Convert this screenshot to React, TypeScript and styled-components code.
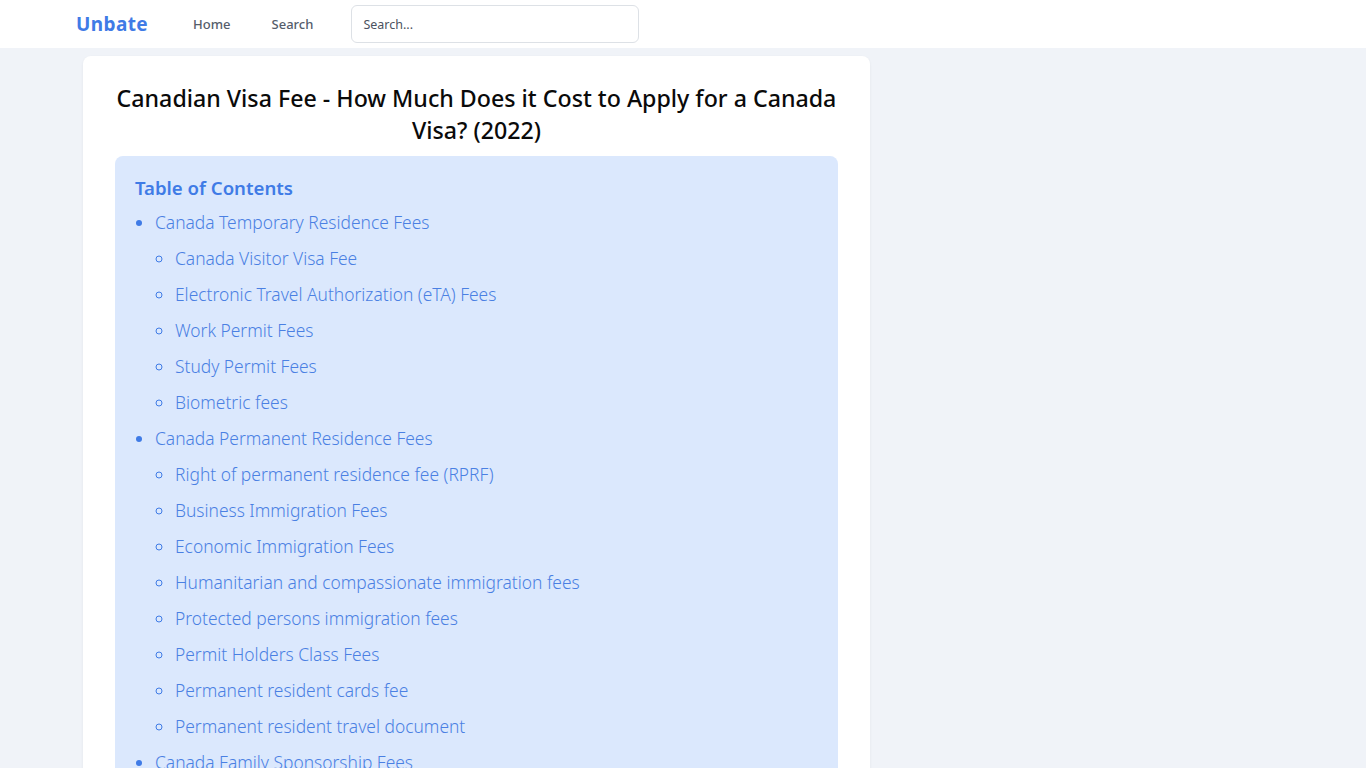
import React from "react";
import styled, { createGlobalStyle } from "styled-components";

const GlobalStyle = createGlobalStyle`
  * { box-sizing: border-box; }
  body {
    margin: 0;
    background: #f0f3f8;
    font-family: "Noto Sans", "Open Sans", sans-serif;
    color: #111;
  }
`;

interface TocItem {
  title: string;
  children?: string[];
}

const toc: TocItem[] = [
  {
    title: "Canada Temporary Residence Fees",
    children: [
      "Canada Visitor Visa Fee",
      "Electronic Travel Authorization (eTA) Fees",
      "Work Permit Fees",
      "Study Permit Fees",
      "Biometric fees",
    ],
  },
  {
    title: "Canada Permanent Residence Fees",
    children: [
      "Right of permanent residence fee (RPRF)",
      "Business Immigration Fees",
      "Economic Immigration Fees",
      "Humanitarian and compassionate immigration fees",
      "Protected persons immigration fees",
      "Permit Holders Class Fees",
      "Permanent resident cards fee",
      "Permanent resident travel document",
    ],
  },
  {
    title: "Canada Family Sponsorship Fees",
    children: ["Sponsor a spouse or partner", "Sponsor a parent or grandparent"],
  },
];

const App = () => {
  return (
    <>
      <GlobalStyle />
      <Header>
        <HeaderInner>
          <Logo>Unbate</Logo>
          <NavLink>Home</NavLink>
          <NavLink>Search</NavLink>
          <SearchInput placeholder="Search..." />
        </HeaderInner>
      </Header>
      <Main>
        <Card>
          <Title>Canadian Visa Fee - How Much Does it Cost to Apply for a Canada Visa? (2022)</Title>
          <TocBox>
            <TocHeading>Table of Contents</TocHeading>
            <TopList>
              {toc.map((item) => (
                <TopItem key={item.title}>
                  <TocLink>{item.title}</TocLink>
                  {item.children && (
                    <SubList>
                      {item.children.map((c) => (
                        <SubItem key={c}>
                          <TocLink>{c}</TocLink>
                        </SubItem>
                      ))}
                    </SubList>
                  )}
                </TopItem>
              ))}
            </TopList>
          </TocBox>
        </Card>
      </Main>
    </>
  );
};

export default App;

const Header = styled.header`
  background: #fff;
  height: 48px;
`;

const HeaderInner = styled.div`
  display: flex;
  align-items: center;
  height: 100%;
  padding-left: 76px;
`;

const Logo = styled.a`
  font-size: 19px;
  font-weight: 700;
  color: #3f7be6;
  letter-spacing: 0.4px;
  margin-right: 45px;
`;

const NavLink = styled.a`
  font-size: 13px;
  font-weight: 500;
  color: #555d6b;
  margin-right: 41px;
  &:last-of-type {
    margin-right: 38px;
  }
`;

const SearchInput = styled.input`
  width: 288px;
  height: 38px;
  border: 1px solid #dde1e6;
  border-radius: 6px;
  padding: 0 11px;
  font-family: "Noto Sans", sans-serif;
  font-size: 12.5px;
  color: #333;
  outline: none;
  &::placeholder {
    color: #4b5260;
  }
`;

const Main = styled.main`
  width: 1200px;
  margin: 8px auto 0;
`;

const Card = styled.article`
  width: 787px;
  background: #fff;
  border-radius: 8px;
  box-shadow: 0 1px 3px rgba(0, 0, 0, 0.06);
  padding: 26px 32px 32px;
`;

const Title = styled.h1`
  margin: 0 0 10px;
  font-size: 23.2px;
  font-weight: 500;
  line-height: 32px;
  text-align: center;
  color: #0a0a0a;
`;

const TocBox = styled.nav`
  background: #dbe8fd;
  border-radius: 8px;
  padding: 20px 20px 20px;
`;

const TocHeading = styled.h2`
  margin: 0 0 4px;
  font-size: 18.6px;
  font-weight: 600;
  line-height: 24px;
  color: #3f7be6;
`;

const TopList = styled.ul`
  margin: 0;
  padding-left: 20px;
  list-style: disc;
  color: #3f7be6;
`;

const TopItem = styled.li`
  font-size: 17.4px;
  line-height: 36px;
`;

const SubList = styled.ul`
  margin: 0;
  padding-left: 20px;
  list-style: circle;
`;

const SubItem = styled.li`
  font-size: 17.4px;
  line-height: 36px;
`;

const TocLink = styled.a`
  color: #4a80e3;
  font-weight: 300;
`;
